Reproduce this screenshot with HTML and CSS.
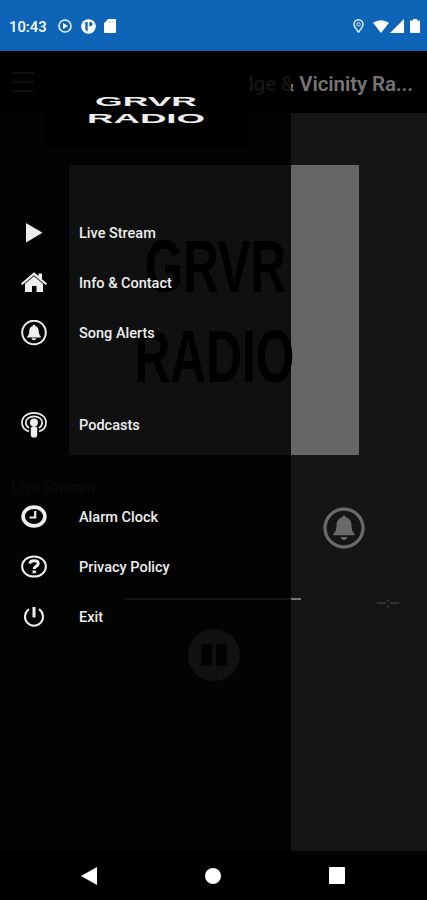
FILE: index.html
```
<!DOCTYPE html>
<html lang="en">
<head>
    <meta charset="UTF-8">
    <meta name="viewport" content="width=device-width, initial-scale=1.0">
    <title>GRVR Radio</title>
    <link rel="stylesheet" href="styles.css">
</head>
<body>
    <div class="statusbar">
        <div class="left">
            <span class="time">10:43</span>
            <svg width="14" height="14" viewBox="0 0 14 14"><circle cx="7" cy="7" r="6" fill="none" stroke="#e4efff" stroke-width="1.6"/><path d="M5 4v6L10 7z" fill="#fff"/></svg>
            <svg width="15" height="15" viewBox="0 0 15 15"><circle cx="7.5" cy="7.5" r="7.3" fill="#fff"/><path d="M4.300 3h2.400v9.500C5.400 12 4.300 11 4.300 9.500zM8.300 3h1.200a2.100 2.100 0 0 1 0 4.200H8.300z" fill="#1065b8"/></svg>
            <svg width="12" height="14" viewBox="0 0 12 14"><path d="M4.300 0H11q1 0 1 1v12q0 1-1 1H1q-1 0-1-1V4.300z" fill="#fff"/><path d="M4.500 2v2M6.700 2v2M8.900 2v2" stroke="#b5d1ee"/></svg>
        </div>
        <div class="right">
            <svg class="pin" width="11" height="14" viewBox="0 0 11 14"><path d="M5.500 13C3 10 1 7.700 1 5.300a4.500 4.500 0 0 1 9 0C10 7.700 8 10 5.500 13z" fill="none" stroke="#e4efff" stroke-width="1.500"/><circle cx="5.500" cy="5.300" r="1.700" fill="none" stroke="#e4efff"/></svg>
            <svg class="wifi" width="16" height="13" viewBox="0 0 16 13"><path d="M0 2.800Q8-2.500 16 2.800L8 13z" fill="#fff"/></svg>
            <svg class="signal" width="14" height="14" viewBox="0 0 14 14"><path d="M14 0v14H0z" fill="#fff"/></svg>
            <svg width="10" height="14" viewBox="0 0 10 14"><path d="M3 0h4v1.500h2q1 0 1 1V13q0 1-1 1H1q-1 0-1-1V2.500q0-1 1-1h2z" fill="#fff"/></svg>
        </div>
    </div>

    <div class="screen">
        <div class="header">
            <div class="burger"><span></span><span></span><span></span></div>
            <h1>lge &amp; Vicinity Ra...</h1>
        </div>
        <div class="player">
            <svg class="cover" width="290" height="290" viewBox="0 0 290 290">
                <text x="76" y="126.500" textLength="141" lengthAdjust="spacingAndGlyphs">GRVR</text>
                <text x="65.500" y="216.500" textLength="160" lengthAdjust="spacingAndGlyphs">RADIO</text>
            </svg>
            <div class="station">Live Stream</div>
            <div class="alert">
                <svg width="42" height="42" viewBox="0 0 42 42"><circle cx="21" cy="21" r="19" fill="none" stroke="#696969" stroke-width="3.300"/><path d="M21 8.500c1.200 0 1.800.8 2 1.700 4 1.200 5.500 4.500 5.500 8.300 0 4.500 1.200 6.500 3.300 8.500v1.200H10.200V27c2.100-2 3.300-4 3.300-8.500 0-3.800 1.500-7.100 5.500-8.300.2-.9.800-1.700 2-1.700zM17.500 30h7c-.5 2-1.700 3-3.500 3s-3-1-3.500-3z" fill="#696969"/></svg>
            </div>
            <div class="progress">
                <div class="track"></div>
                <svg class="length" width="22" height="10" viewBox="0 0 22 10"><path d="M0 5h9M13 5h9" stroke="#4c4c4c"/><path d="M10 1.500h2v2h-2zM10 7.500h2v2h-2z" fill="#383838"/></svg>
            </div>
            <div class="pause">
                <svg width="52" height="52" viewBox="0 0 52 52"><circle cx="26" cy="26" r="26" fill="#696969"/><path d="M13 15h11v22H13zM28 15h11v22H28z" fill="#151515"/></svg>
            </div>
        </div>

        <div class="drawer">
            <div class="banner">
                <svg width="204" height="96" viewBox="0 0 204 96">
                    <text x="51" y="54.500" textLength="102" lengthAdjust="spacingAndGlyphs">GRVR</text>
                    <text x="43" y="72" textLength="118" lengthAdjust="spacingAndGlyphs">RADIO</text>
                </svg>
            </div>
            <ul>
                <li>
                    <svg viewBox="0 0 26 26"><path d="M5 3v19.500L21.500 12.700z"/></svg>
                    Live Stream
                </li>
                <li>
                    <svg viewBox="0 0 26 26"><path d="M13 2.300l4.500 3.800V3.500H21v5.700l5 4.200-1.300 1.500L13 5.200 1.300 14.900 0 13.400z"/><path d="M13 6.300l9 7.500V22h-6.500v-6h-4.500v6H4V13.800z"/></svg>
                    Info &amp; Contact
                </li>
                <li>
                    <svg viewBox="0 0 26 26"><circle cx="13" cy="12.500" r="11.800" class="line"/><path d="M13 4.800c.8 0 1.200.5 1.300 1.100 2.500.7 3.400 2.700 3.400 5.100 0 2.800.8 4.200 2.100 5.400v1H6.200v-1c1.300-1.200 2.100-2.600 2.100-5.400 0-2.400.9-4.400 3.400-5.100.1-.6.500-1.100 1.300-1.100zM10.700 18.300h4.600c-.3 1.300-1.100 1.900-2.300 1.900s-2-.6-2.300-1.900z"/></svg>
                    Song Alerts
                </li>
                <li class="gap">
                    <svg viewBox="0 0 26 26"><path d="M8 19.500C3.500 18 1 15 1 10.800 1 5 6 .9 13 .9s12 4.100 12 9.900c0 4.200-2.500 7.200-7 8.700" class="line thin"/><path d="M8 16C6 14.800 4.800 13 4.800 10.800 4.800 7 8.300 4.300 13 4.300s8.200 2.700 8.200 6.500c0 2.200-1.200 4-3.200 5.200" class="line thin"/><circle cx="13" cy="10.500" r="4"/><rect x="9.800" y="14.200" width="6.400" height="11.300" rx="2.800"/></svg>
                    Podcasts
                </li>
                <li class="gap">
                    <svg viewBox="0 0 26 26"><ellipse cx="13" cy="12.500" rx="10.900" ry="9.400" class="line thick"/><path d="M14.200 7v6.500H8.500" class="line clock"/></svg>
                    Alarm Clock
                </li>
                <li>
                    <svg viewBox="0 0 26 26"><ellipse cx="13" cy="12.500" rx="11.900" ry="10.100" class="line"/><path d="M8.800 9.600C9 7.500 10.700 6.700 13 6.700c2.500 0 4.300 1 4.300 2.900 0 2.700-4.100 2.600-4.100 5.300" class="line mark"/><rect x="11.500" y="16.500" width="3.400" height="2.700"/></svg>
                    Privacy Policy
                </li>
                <li>
                    <svg viewBox="0 0 26 26"><path d="M8 5.200a9 9 0 1 0 10 0" class="line"/><path d="M13 3v10.500" class="line power"/></svg>
                    Exit
                </li>
            </ul>
        </div>
    </div>

    <div class="navbar">
        <svg width="16" height="18" viewBox="0 0 16 18"><path d="M16 0v18L0 9z" fill="#fff"/></svg>
        <svg width="16" height="16" viewBox="0 0 16 16"><circle cx="8" cy="8" r="8" fill="#fff"/></svg>
        <svg width="16" height="17" viewBox="0 0 16 17"><rect width="16" height="17" rx="1" fill="#fff"/></svg>
    </div>
</body>
</html>
```

FILE: styles.css
```
*{
    margin: 0;
    padding: 0;
    box-sizing: border-box;
}
body{
    width: 427px;
    height: 900px;
    background-color: black;
    font-family: Roboto, "Liberation Sans", sans-serif;
    overflow: hidden;
}
svg{
    display: block;
    flex-shrink: 0;
}
.statusbar{
    height: 51px;
    padding: 1px 7px 0 9px;
    background-color: #0e65b7;
    display: flex;
    align-items: center;
    justify-content: space-between;
}
.left, .right{
    display: flex;
    align-items: center;
}
.time{
    width: 49px;
    padding-top: 1px;
    font-size: 14.8px;
    font-weight: 500;
    color: white;
}
.left svg{
    margin-right: 8.5px;
}
.pin{
    margin-right: 9px;
}
.wifi{
    margin-right: 1px;
}
.signal{
    margin-right: 6px;
}
.screen{
    position: relative;
    height: 800px;
    background-color: #151515;
}
.header{
    height: 62px;
    padding: 3px 14px 0 12px;
    background-color: black;
    display: flex;
    align-items: center;
    justify-content: space-between;
}
.burger{
    display: flex;
    flex-direction: column;
    gap: 7px;
    margin-bottom: 4px;
}
.burger span{
    width: 22px;
    height: 2px;
    background-color: #555555;
}
.header h1{
    font-size: 20.5px;
    font-weight: 600;
    letter-spacing: -0.1px;
    color: #747474;
}
.player{
    display: flex;
    flex-direction: column;
    padding-top: 52px;
}
.cover{
    margin-left: 69px;
    background-color: #666666;
}
.cover text{
    font: bold 75px "Liberation Sans", sans-serif;
    fill: black;
}
.station{
    margin: 24px 0 0 11px;
    font-size: 16px;
    line-height: 18px;
    font-weight: 500;
    color: #3c3c3c;
}
.alert{
    margin: 10px 0 0 323px;
}
.progress{
    display: flex;
    margin: 49px 0 0 124px;
}
.track{
    width: 177px;
    height: 2px;
    margin-right: 76px;
    background-color: #757575;
}
.pause{
    margin: 21px 0 0 188px;
}
/* slide out menu */
.drawer{
    position: absolute;
    top: 0;
    left: 0;
    width: 291px;
    height: 800px;
    background-color: rgba(0,0,0,0.84);
}
.banner{
    width: 204px;
    height: 96px;
    margin-left: 44px;
    background-color: black;
}
.banner text{
    font: bold 13.5px "Liberation Sans", sans-serif;
    fill: #eeeeee;
}
.drawer ul{
    list-style-type: none;
    padding: 61px 0 0 20.5px;
}
.drawer li{
    display: flex;
    align-items: center;
    gap: 32.5px;
    height: 50px;
    font-size: 14.5px;
    font-weight: 500;
    color: #eeeeee;
}
.drawer li.gap{
    margin-top: 42px;
}
.drawer li svg{
    width: 26px;
    height: 26px;
    fill: #eeeeee;
}
.drawer .line{
    fill: none;
    stroke: #eeeeee;
    stroke-width: 2;
}
.drawer .thin{
    stroke-width: 1.7;
}
.drawer .thick{
    stroke-width: 3.6;
}
.drawer .clock{
    stroke-width: 2.2;
}
.drawer .mark{
    stroke-width: 3;
}
.drawer .power{
    stroke-width: 3;
}
.navbar{
    height: 49px;
    padding: 0 82px 0 81px;
    display: flex;
    align-items: center;
    justify-content: space-between;
}
```
